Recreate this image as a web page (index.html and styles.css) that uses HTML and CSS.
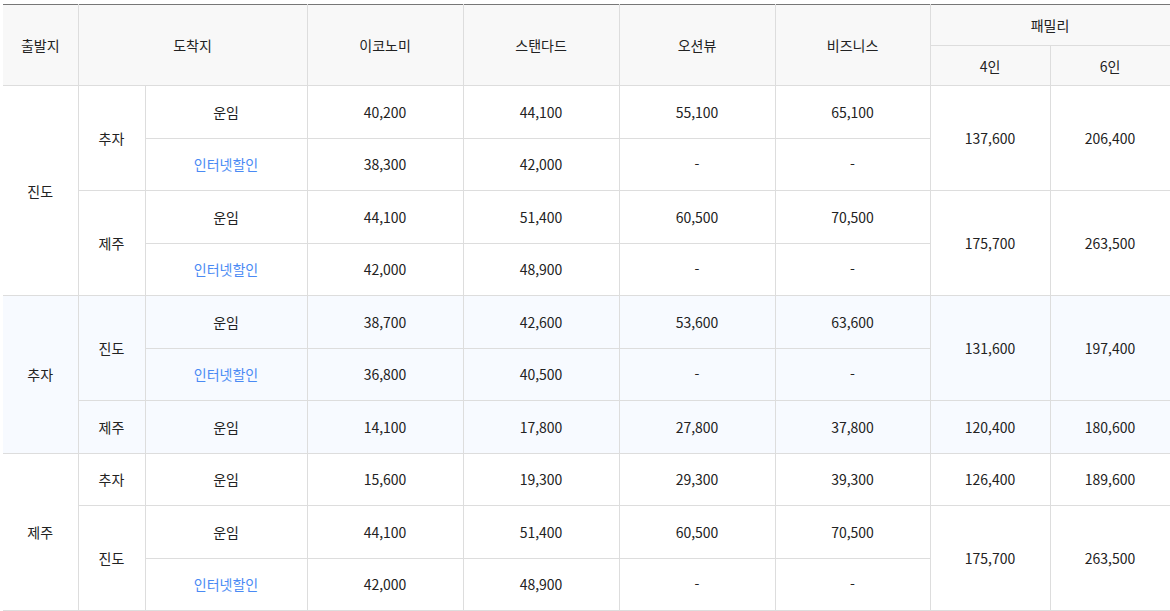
FILE: index.html
```html
<!DOCTYPE html>
<html lang="ko">
<head>
<meta charset="utf-8">
<link rel="stylesheet" href="styles.css">
</head>
<body>
<div class="wrap">
<table class="fare">
  <colgroup>
    <col class="c-from"><col class="c-to"><col class="c-type">
    <col class="c-p"><col class="c-p"><col class="c-p"><col class="c-p2">
    <col class="c-f"><col class="c-f">
  </colgroup>
  <thead>
    <tr class="h1">
      <th rowspan="2">출발지</th>
      <th rowspan="2" colspan="2">도착지</th>
      <th rowspan="2">이코노미</th>
      <th rowspan="2">스탠다드</th>
      <th rowspan="2">오션뷰</th>
      <th rowspan="2">비즈니스</th>
      <th colspan="2">패밀리</th>
    </tr>
    <tr class="h2">
      <th>4인</th>
      <th>6인</th>
    </tr>
  </thead>
  <tbody>
    <tr>
      <td rowspan="4">진도</td>
      <td rowspan="2">추자</td>
      <td>운임</td>
      <td>40,200</td><td>44,100</td><td>55,100</td><td>65,100</td>
      <td rowspan="2">137,600</td><td rowspan="2">206,400</td>
    </tr>
    <tr>
      <td class="net">인터넷할인</td>
      <td>38,300</td><td>42,000</td><td>-</td><td>-</td>
    </tr>
    <tr>
      <td rowspan="2">제주</td>
      <td>운임</td>
      <td>44,100</td><td>51,400</td><td>60,500</td><td>70,500</td>
      <td rowspan="2">175,700</td><td rowspan="2">263,500</td>
    </tr>
    <tr>
      <td class="net">인터넷할인</td>
      <td>42,000</td><td>48,900</td><td>-</td><td>-</td>
    </tr>
  </tbody>
  <tbody class="hl">
    <tr>
      <td rowspan="3">추자</td>
      <td rowspan="2">진도</td>
      <td>운임</td>
      <td>38,700</td><td>42,600</td><td>53,600</td><td>63,600</td>
      <td rowspan="2">131,600</td><td rowspan="2">197,400</td>
    </tr>
    <tr>
      <td class="net">인터넷할인</td>
      <td>36,800</td><td>40,500</td><td>-</td><td>-</td>
    </tr>
    <tr>
      <td>제주</td>
      <td>운임</td>
      <td>14,100</td><td>17,800</td><td>27,800</td><td>37,800</td>
      <td>120,400</td><td>180,600</td>
    </tr>
  </tbody>
  <tbody>
    <tr>
      <td rowspan="3">제주</td>
      <td>추자</td>
      <td>운임</td>
      <td>15,600</td><td>19,300</td><td>29,300</td><td>39,300</td>
      <td>126,400</td><td>189,600</td>
    </tr>
    <tr>
      <td rowspan="2">진도</td>
      <td>운임</td>
      <td>44,100</td><td>51,400</td><td>60,500</td><td>70,500</td>
      <td rowspan="2">175,700</td><td rowspan="2">263,500</td>
    </tr>
    <tr>
      <td class="net">인터넷할인</td>
      <td>42,000</td><td>48,900</td><td>-</td><td>-</td>
    </tr>
  </tbody>
</table>
</div>
</body>
</html>
```
FILE: styles.css
```css
html, body {
  margin: 0;
  padding: 0;
  background: #fff;
}
.wrap {
  padding: 4px 0 0 3px;
}
.fare {
  width: 1167px;
  table-layout: fixed;
  border-collapse: collapse;
  font-family: "Noto Sans CJK KR", "Noto Sans", sans-serif;
  font-size: 14px;
  color: #222;
  border-top: 1px solid #777;
}
.c-from { width: 75px; }
.c-to { width: 67px; }
.c-type { width: 162px; }
.c-p { width: 156px; }
.c-p2 { width: 155px; }
.c-f { width: 120px; }

.fare th,
.fare td {
  border: 1px solid #ddd;
  text-align: center;
  vertical-align: middle;
  padding: 0;
  line-height: 20px;
}
.fare th:first-child,
.fare tbody tr td:first-child[rowspan] {
  border-left: none;
}
.fare th {
  background: #f8f8f8;
  font-weight: 400;
  color: #222;
}
.fare thead tr.h1 th {
  border-top: 1px solid #777;
}
.fare tr.h1 { height: 41px; }
.fare tr.h2 { height: 40px; }
.fare tbody tr { height: 52.5px; }
.fare tbody.hl td {
  background: #f7faff;
}
.fare td.net {
  color: #4a8af4;
}
```
